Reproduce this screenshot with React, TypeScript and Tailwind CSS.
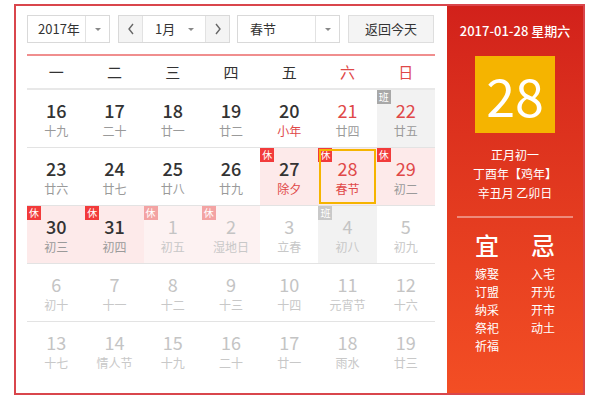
import React from "react";

type Cell = {
  d: number;
  l: string;
  out?: boolean;
  redNum?: boolean;
  redLunar?: boolean;
  bg?: "rest" | "work";
  badge?: "休" | "班";
  sel?: boolean;
};

const rows: Cell[][] = [
  [
    { d: 16, l: "十九" },
    { d: 17, l: "二十" },
    { d: 18, l: "廿一" },
    { d: 19, l: "廿二" },
    { d: 20, l: "小年", redLunar: true },
    { d: 21, l: "廿四", redNum: true },
    { d: 22, l: "廿五", redNum: true, bg: "work", badge: "班" },
  ],
  [
    { d: 23, l: "廿六" },
    { d: 24, l: "廿七" },
    { d: 25, l: "廿八" },
    { d: 26, l: "廿九" },
    { d: 27, l: "除夕", redLunar: true, bg: "rest", badge: "休" },
    { d: 28, l: "春节", redNum: true, redLunar: true, bg: "rest", badge: "休", sel: true },
    { d: 29, l: "初二", redNum: true, bg: "rest", badge: "休" },
  ],
  [
    { d: 30, l: "初三", bg: "rest", badge: "休" },
    { d: 31, l: "初四", bg: "rest", badge: "休" },
    { d: 1, l: "初五", out: true, bg: "rest", badge: "休" },
    { d: 2, l: "湿地日", out: true, bg: "rest", badge: "休" },
    { d: 3, l: "立春", out: true },
    { d: 4, l: "初八", out: true, bg: "work", badge: "班" },
    { d: 5, l: "初九", out: true },
  ],
  [
    { d: 6, l: "初十", out: true },
    { d: 7, l: "十一", out: true },
    { d: 8, l: "十二", out: true },
    { d: 9, l: "十三", out: true },
    { d: 10, l: "十四", out: true },
    { d: 11, l: "元宵节", out: true },
    { d: 12, l: "十六", out: true },
  ],
  [
    { d: 13, l: "十七", out: true },
    { d: 14, l: "情人节", out: true },
    { d: 15, l: "十九", out: true },
    { d: 16, l: "二十", out: true },
    { d: 17, l: "廿一", out: true },
    { d: 18, l: "雨水", out: true },
    { d: 19, l: "廿三", out: true },
  ],
];

function Caret() {
  return (
    <svg width="8" height="5" viewBox="0 0 8 5">
      <path d="M1 1 L4 4 L7 1 Z" fill="#888" />
    </svg>
  );
}

function DayCell({ c }: { c: Cell }) {
  let bg = "bg-white";
  if (c.bg === "rest") bg = c.out ? "bg-[#fdf2f2]" : "bg-[#fdeaea]";
  if (c.bg === "work") bg = "bg-[#f2f2f2]";
  const numColor = c.out ? "text-[#c4c4c4]" : c.redNum ? "text-[#e04848]" : "text-[#333333] font-medium";
  const lunarColor = c.out ? "text-[#c8c8c8]" : c.redLunar ? "text-[#e04848]" : "text-[#9a9a9a]";
  let badgeCls = "";
  if (c.badge === "休") badgeCls = c.out ? "bg-[#f3a3a3]" : "bg-[#f23b3b]";
  if (c.badge === "班") badgeCls = c.out ? "bg-[#c9c9c9]" : "bg-[#a8a8a8]";
  return (
    <div className={`relative h-[57px] flex flex-col items-center justify-center ${bg}`}>
      {c.badge && (
        <div
          className={`absolute left-0 top-0 w-[14px] h-[14px] text-[10px] leading-[14px] text-white text-center ${badgeCls}`}
        >
          {c.badge}
        </div>
      )}
      {c.sel && <div className="absolute left-[1px] right-[1px] top-[1px] bottom-[1px] border-2 border-[#f5b400]" />}
      <div className={`text-[18px] leading-[22px] mt-[2px] ${numColor}`}>{c.d}</div>
      <div className={`text-[12px] leading-[18px] mt-[1px] ${lunarColor}`}>{c.l}</div>
    </div>
  );
}

export default function App() {
  const week = ["一", "二", "三", "四", "五", "六", "日"];
  return (
    <div
      className="w-[600px] h-[400px] bg-white pt-[4px] pl-[14px]"
      style={{ fontFamily: '"Noto Sans CJK SC", "Liberation Sans", sans-serif' }}
    >
      <div className="w-[571px] h-[391px] border-2 border-[#d9464c] flex">
        <div className="w-[431px] pl-[11px] pr-[12px] pt-[9px]">
          {/* toolbar */}
          <div className="flex items-center h-[28px] text-[13px] text-[#333]">
            <div className="flex h-[28px] w-[83px] border border-[#d9d9d9] bg-white">
              <div className="flex-1 flex items-center pl-[10px]">2017年</div>
              <div className="w-[24px] border-l border-[#e2e2e2] flex items-center justify-center">
                <Caret />
              </div>
            </div>
            <div className="flex h-[28px] w-[112px] ml-[8px] border border-[#d9d9d9]">
              <div className="w-[24px] bg-[#f4f4f4] flex items-center justify-center text-[#666] border-r border-[#e2e2e2]">
                <svg width="8" height="12" viewBox="0 0 8 12">
                  <path d="M6 1 L2 6 L6 11" stroke="#666" strokeWidth="1.4" fill="none" />
                </svg>
              </div>
              <div className="flex-1 flex items-center justify-between pl-[12px] pr-[10px] bg-white">
                <span>1月</span>
                <Caret />
              </div>
              <div className="w-[24px] bg-[#f4f4f4] flex items-center justify-center border-l border-[#e2e2e2]">
                <svg width="8" height="12" viewBox="0 0 8 12">
                  <path d="M2 1 L6 6 L2 11" stroke="#666" strokeWidth="1.4" fill="none" />
                </svg>
              </div>
            </div>
            <div className="flex h-[28px] w-[103px] ml-[7px] border border-[#d9d9d9] bg-white">
              <div className="flex-1 flex items-center pl-[12px]">春节</div>
              <div className="w-[24px] border-l border-[#e2e2e2] flex items-center justify-center">
                <Caret />
              </div>
            </div>
            <div className="h-[28px] w-[86px] ml-[8px] border border-[#dedede] bg-[#f4f4f4] flex items-center justify-center">
              返回今天
            </div>
          </div>
          {/* red line */}
          <div className="mt-[11px] h-[2px] bg-[#f08e8e]" />
          {/* week header */}
          <div className="grid grid-cols-7 h-[34px] items-center text-[15px] border-b-2 border-[#e8e8e8]">
            {week.map((w, i) => (
              <div key={w} className={`text-center ${i >= 5 ? "text-[#e04848]" : "text-[#333]"}`}>
                {w}
              </div>
            ))}
          </div>
          {/* rows */}
          {rows.map((r, ri) => (
            <div
              key={ri}
              className={`grid grid-cols-7 ${ri < rows.length - 1 ? "border-b border-[#e3e3e3]" : ""}`}
            >
              {r.map((c, ci) => (
                <DayCell key={ci} c={c} />
              ))}
            </div>
          ))}
        </div>
        {/* right panel */}
        <div className="flex-1 bg-gradient-to-b from-[#d2211b] to-[#f34e24] flex flex-col items-center text-white">
          <div className="mt-[16px] text-[13px] leading-[18px] font-medium">2017-01-28 星期六</div>
          <div className="mt-[16px] w-[80px] h-[77px] bg-[#f5b400] flex items-center justify-center text-[52px] leading-none">
            28
          </div>
          <div className="mt-[12px] text-[12px] leading-[19px] text-center">
            <div>正月初一</div>
            <div>丁酉年【鸡年】</div>
            <div>辛丑月 乙卯日</div>
          </div>
          <div className="mt-[14px] w-[116px] h-[2px] bg-[#ee8a7a]" />
          <div className="mt-[12px] flex gap-[30px]">
            <div className="flex flex-col items-center w-[26px]">
              <div className="text-[24px] leading-[30px] font-medium">宜</div>
              <div className="mt-[5px] text-[12px] leading-[18px] text-center">
                <div>嫁娶</div>
                <div>订盟</div>
                <div>纳采</div>
                <div>祭祀</div>
                <div>祈福</div>
              </div>
            </div>
            <div className="flex flex-col items-center w-[26px]">
              <div className="text-[24px] leading-[30px] font-medium">忌</div>
              <div className="mt-[5px] text-[12px] leading-[18px] text-center">
                <div>入宅</div>
                <div>开光</div>
                <div>开市</div>
                <div>动土</div>
              </div>
            </div>
          </div>
        </div>
      </div>
    </div>
  );
}
